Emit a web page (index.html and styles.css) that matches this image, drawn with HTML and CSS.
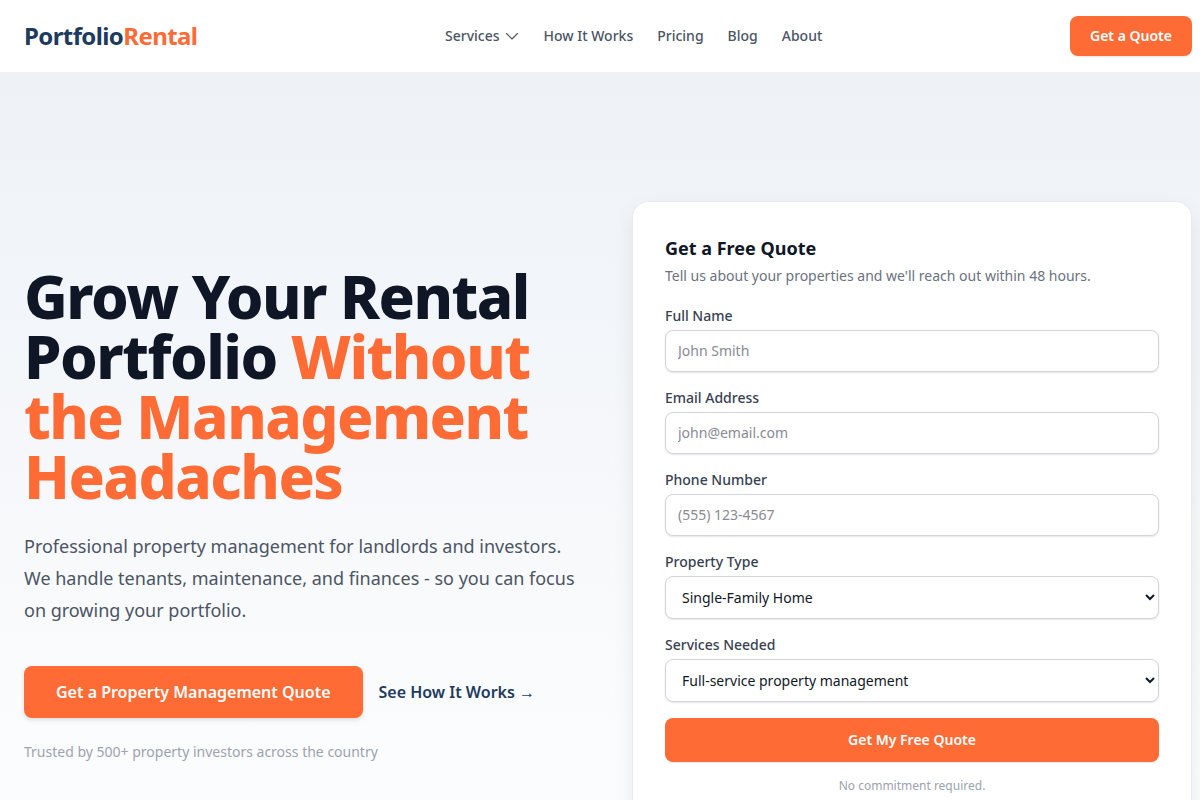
FILE: index.html
```html
<!DOCTYPE html>
<html lang="en">
<head>
    <meta charset="UTF-8">
    <meta name="viewport" content="width=device-width, initial-scale=1.0">
    <title>PortfolioRental - Property Management</title>
    <link rel="stylesheet" href="styles.css">
</head>
<body>

    <header class="header">
        <a href="#" class="logo">Portfolio<span class="accent">Rental</span></a>
        <nav class="nav">
            <button type="button" class="nav-link">
                Services
                <svg class="chevron" viewBox="0 0 16 16" fill="none" stroke="currentColor" stroke-width="1.1" stroke-linecap="round" stroke-linejoin="round" aria-hidden="true">
                    <path d="M2.5 5.5 8 11l5.5-5.5"/>
                </svg>
            </button>
            <a href="#how-it-works" class="nav-link">How It Works</a>
            <a href="#pricing" class="nav-link">Pricing</a>
            <a href="#blog" class="nav-link">Blog</a>
            <a href="#about" class="nav-link">About</a>
        </nav>
        <a href="#quote" class="btn btn-small">Get a Quote</a>
    </header>

    <main class="hero">
        <section class="intro">
            <h1>Grow Your Rental Portfolio <span class="accent">Without the Management Headaches</span></h1>
            <p class="lead">Professional property management for landlords and investors. We handle tenants, maintenance, and finances - so you can focus on growing your portfolio.</p>
            <div class="actions">
                <a href="#quote" class="btn btn-large">Get a Property Management Quote</a>
                <a href="#how-it-works" class="text-link">See How It Works →</a>
            </div>
            <p class="trusted">Trusted by 500+ property investors across the country</p>
        </section>

        <section class="card" id="quote">
            <h2>Get a Free Quote</h2>
            <p class="card-text">Tell us about your properties and we'll reach out within 48 hours.</p>
            <form class="quote-form">
                <div class="field">
                    <label for="name">Full Name</label>
                    <input type="text" id="name" name="name" placeholder="John Smith">
                </div>
                <div class="field">
                    <label for="email">Email Address</label>
                    <input type="email" id="email" name="email" placeholder="john@email.com">
                </div>
                <div class="field">
                    <label for="phone">Phone Number</label>
                    <input type="tel" id="phone" name="phone" placeholder="(555) 123-4567">
                </div>
                <div class="field">
                    <label for="property">Property Type</label>
                    <select id="property" name="property">
                        <option>Single-Family Home</option>
                    </select>
                </div>
                <div class="field">
                    <label for="services">Services Needed</label>
                    <select id="services" name="services">
                        <option>Full-service property management</option>
                    </select>
                </div>
                <button type="submit" class="btn btn-submit">Get My Free Quote</button>
                <p class="note">No commitment required.</p>
            </form>
        </section>
    </main>

</body>
</html>
```
FILE: styles.css
```css
* {
    box-sizing: border-box;
}
body {
    margin: 0;
    font-family: 'Noto Sans', sans-serif;
    font-size: 16px;
    line-height: 24px;
    color: #111827;
    background-color: #fff;
}
h1, h2, p {
    margin: 0;
}
a {
    text-decoration: none;
}
button, input, select {
    font-family: inherit;
}
.accent {
    color: #ff6b35;
}

/* Header */
.header {
    display: flex;
    align-items: center;
    justify-content: space-between;
    padding: 16px 8px 16px 24px;
    background-color: #fff;
    border-bottom: 1px solid #eef2f7;
}
.logo {
    font-size: 24px;
    line-height: 32px;
    font-weight: 700;
    letter-spacing: -0.025em;
    color: #1e3a5f;
}
.nav {
    display: flex;
    align-items: center;
    gap: 24px;
}
.nav-link {
    display: flex;
    align-items: center;
    gap: 4px;
    padding: 0;
    border: none;
    background: none;
    font-size: 14px;
    line-height: 20px;
    font-weight: 500;
    color: #4b5563;
    cursor: pointer;
}
.chevron {
    width: 16px;
    height: 16px;
}

/* Buttons */
.btn {
    border: none;
    border-radius: 8px;
    background-color: #ff6b35;
    color: #fff;
    font-size: 14px;
    line-height: 20px;
    font-weight: 600;
    text-align: center;
    cursor: pointer;
    box-shadow: 0 1px 2px rgba(0, 0, 0, 0.1);
}
.btn-small {
    padding: 10px 20px;
}
.btn-large {
    padding: 14px 32px;
    font-size: 16px;
    line-height: 24px;
    box-shadow: 0 2px 4px rgba(0, 0, 0, 0.12);
}
.btn-submit {
    padding: 12px 24px;
}

/* Hero */
.hero {
    display: grid;
    grid-template-columns: 1fr 1fr;
    gap: 48px;
    align-items: center;
    padding: 128px 8px 128px 24px;
    background: linear-gradient(#eef2f7, #fff);
}
h1 {
    font-size: 60px;
    line-height: 60px;
    font-weight: 800;
    letter-spacing: -0.025em;
    color: #0f1626;
}
.lead {
    margin-top: 24px;
    font-size: 18px;
    line-height: 32px;
    color: #4b5563;
}
.actions {
    display: flex;
    align-items: center;
    gap: 16px;
    margin-top: 40px;
}
.text-link {
    font-weight: 600;
    color: #1e3a5f;
}
.trusted {
    margin-top: 24px;
    font-size: 14px;
    line-height: 20px;
    color: #9ca3af;
}

/* Quote form */
.card {
    padding: 32px;
    border: 1px solid #e8ebef;
    border-radius: 16px;
    background-color: #fff;
    box-shadow: 0 8px 24px -4px rgba(0, 0, 0, 0.1);
}
h2 {
    font-size: 18px;
    line-height: 28px;
    font-weight: 700;
    color: #0f1626;
}
.card-text {
    margin-top: 4px;
    font-size: 14px;
    line-height: 20px;
    color: #6b7280;
}
.quote-form {
    display: flex;
    flex-direction: column;
    gap: 16px;
    margin-top: 20px;
}
.field {
    display: flex;
    flex-direction: column;
    gap: 4px;
}
label {
    font-size: 14px;
    line-height: 20px;
    font-weight: 500;
    color: #374151;
}
input, select {
    width: 100%;
    padding: 10px 12px;
    border: 1px solid #d1d5db;
    border-radius: 8px;
    background-color: #fff;
    font-size: 14px;
    line-height: 20px;
    color: #111827;
    box-shadow: 0 1px 2px rgba(0, 0, 0, 0.1);
}
input::placeholder {
    color: #888b93;
}
.note {
    font-size: 12px;
    line-height: 16px;
    text-align: center;
    color: #9ca3af;
}
```
